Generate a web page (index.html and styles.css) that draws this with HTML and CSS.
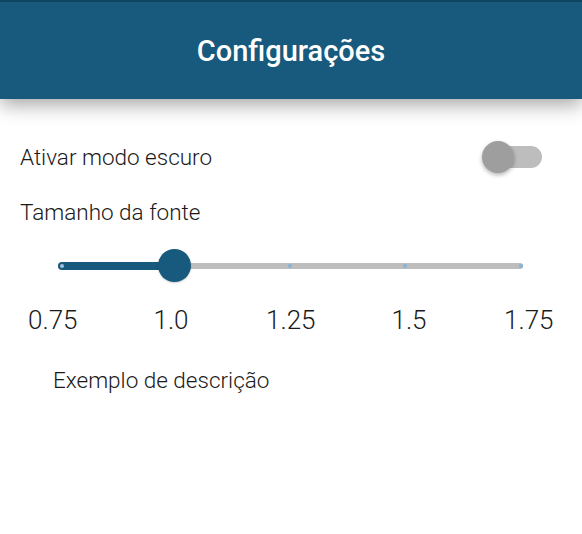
FILE: index.html
```html
<!DOCTYPE html>
<html>
<head>
<title>Configurações</title>
<link rel="stylesheet" href="styles.css">
</head>
<body>

<div class="header">
	<h1>Configurações</h1>
</div>

<div class="content">
	<div class="row">
		<span class="label">Ativar modo escuro</span>
		<div class="switch">
			<div class="track"></div>
			<div class="knob"></div>
		</div>
	</div>

	<div class="row">
		<span class="label">Tamanho da fonte</span>
	</div>

	<div class="slider">
		<div class="rail"></div>
		<div class="fill"></div>
		<span class="tick t0"></span>
		<span class="tick t2"></span>
		<span class="tick t3"></span>
		<span class="tick t4"></span>
		<div class="thumb"></div>
	</div>

	<div class="scale">
		<span>0.75</span>
		<span>1.0</span>
		<span>1.25</span>
		<span>1.5</span>
		<span>1.75</span>
	</div>

	<p class="sample">Exemplo de descrição</p>
</div>

</body>
</html>
```

FILE: styles.css
```css
body {
  margin: 0;
  background-color: white;
  font-family: Roboto, "Liberation Sans", sans-serif;
  color: #1a1a1a;
}

.header {
  height: 99px;
  background-color: #185a7d;
  border-top: 2px solid #104560;
  box-sizing: border-box;
  display: flex;
  align-items: center;
  justify-content: center;
  box-shadow: 0 6px 18px rgba(0, 0, 0, 0.35);
  position: relative;
}

.header h1 {
  margin: 0;
  color: white;
  font-size: 29px;
  font-weight: 500;
}

.content {
  padding: 0 20px;
}

.row {
  display: flex;
  align-items: center;
  justify-content: space-between;
  height: 55px;
}

.row:first-child {
  margin-top: 30px;
}

.label {
  font-size: 22.5px;
  font-weight: 300;
}

.switch {
  position: relative;
  width: 60px;
  height: 32px;
  margin-right: 20px;
}

.track {
  position: absolute;
  left: 4px;
  right: 0;
  top: 5px;
  height: 22px;
  border-radius: 11px;
  background-color: #bdbdbd;
}

.knob {
  position: absolute;
  left: 0;
  top: 0;
  width: 32px;
  height: 32px;
  border-radius: 50%;
  background-color: #9e9e9e;
  box-shadow: 0 2px 4px rgba(0, 0, 0, 0.3);
}

.slider {
  position: relative;
  height: 30px;
  margin: 12px 39px 0 38px;
}

.rail {
  position: absolute;
  left: 0;
  right: 0;
  top: 12px;
  height: 6px;
  border-radius: 3px;
  background-color: #bdbdbd;
}

.fill {
  position: absolute;
  left: 0;
  width: 118px;
  top: 11px;
  height: 8px;
  border-radius: 4px;
  background-color: #185a7d;
}

.tick {
  position: absolute;
  top: 13px;
  width: 4px;
  height: 4px;
  margin-left: -2px;
  border-radius: 50%;
  background-color: #82b4dc;
}

.t0 { left: 4px; background-color: #9fc3e0; }
.t2 { left: 232px; }
.t3 { left: 347px; }
.t4 { left: 463px; }

.thumb {
  position: absolute;
  left: 100px;
  top: -2px;
  width: 33px;
  height: 33px;
  border-radius: 50%;
  background-color: #185a7d;
  box-shadow: 0 1px 2px rgba(0, 0, 0, 0.2);
}

.scale {
  display: grid;
  grid-template-columns: repeat(5, 48px);
  column-gap: 71px;
  margin-left: 8px;
  margin-top: 24px;
  font-size: 26px;
  font-weight: 300;
}

.scale span {
  text-align: center;
  white-space: nowrap;
}

.sample {
  margin: 32px 0 0 33px;
  font-size: 22.5px;
  font-weight: 300;
}
```
